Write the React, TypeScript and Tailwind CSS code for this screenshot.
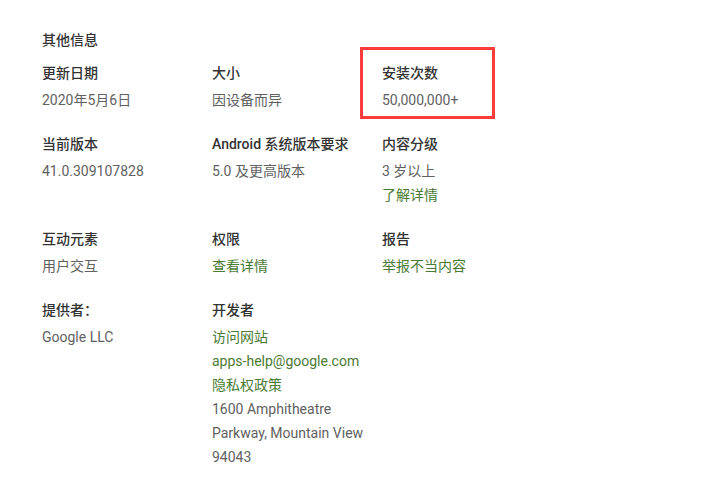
type Line = { text: string; link?: boolean };
type Item = { label: string; lines: Line[]; highlight?: boolean };

const rows: Item[][] = [
  [
    { label: "更新日期", lines: [{ text: "2020年5月6日" }] },
    { label: "大小", lines: [{ text: "因设备而异" }] },
    { label: "安装次数", lines: [{ text: "50,000,000+" }], highlight: true },
  ],
  [
    { label: "当前版本", lines: [{ text: "41.0.309107828" }] },
    { label: "Android 系统版本要求", lines: [{ text: "5.0 及更高版本" }] },
    {
      label: "内容分级",
      lines: [{ text: "3 岁以上" }, { text: "了解详情", link: true }],
    },
  ],
  [
    { label: "互动元素", lines: [{ text: "用户交互" }] },
    { label: "权限", lines: [{ text: "查看详情", link: true }] },
    { label: "报告", lines: [{ text: "举报不当内容", link: true }] },
  ],
  [
    { label: "提供者：", lines: [{ text: "Google LLC" }] },
    {
      label: "开发者",
      lines: [
        { text: "访问网站", link: true },
        { text: "apps-help@google.com", link: true },
        { text: "隐私权政策", link: true },
        { text: "1600 Amphitheatre Parkway, Mountain View 94043" },
      ],
    },
  ],
];

const Cell = ({ item }: { item: Item }) => (
  <div className="relative w-[170px] pr-4">
    {item.highlight && (
      <div className="absolute left-[-22px] top-[-14px] w-[135px] h-[72px] border-[3px] border-[#ff3b3b]" />
    )}
    <div className="font-medium text-[#333333] leading-6">{item.label}</div>
    <div className="mt-[3px]">
      {item.lines.map((l) => (
        <div
          key={l.text}
          className={`leading-6 ${l.link ? "text-[#4a7a33]" : "text-[#616161]"}`}
        >
          {l.text}
        </div>
      ))}
    </div>
  </div>
);

export default function App() {
  return (
    <div
      className="w-[711px] h-[503px] bg-white pl-[42px] pt-[28px] text-[14px]"
      style={{ fontFamily: 'Roboto, "Noto Sans CJK SC", sans-serif' }}
    >
      <div className="font-medium text-[#333333] leading-6">其他信息</div>
      <div className="mt-[9px] flex flex-col gap-5">
        {rows.map((row, i) => (
          <div key={i} className="flex">
            {row.map((item) => (
              <Cell key={item.label} item={item} />
            ))}
          </div>
        ))}
      </div>
    </div>
  );
}
